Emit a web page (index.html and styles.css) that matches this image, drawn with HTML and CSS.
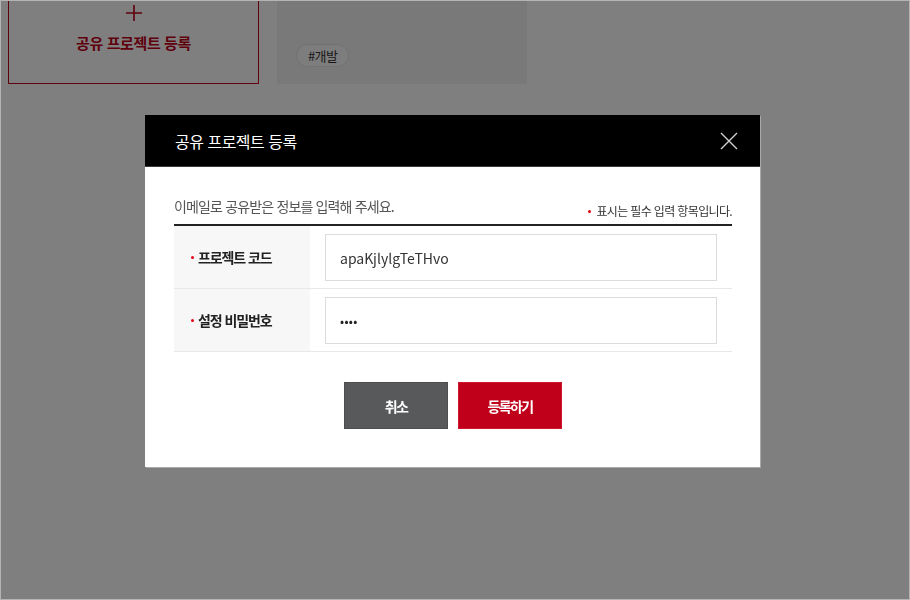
FILE: index.html
```html
<!DOCTYPE html>
<html lang="ko">
<head>
<meta charset="utf-8">
<title>공유 프로젝트 등록</title>
<link rel="stylesheet" href="styles.css">
</head>
<body>
<div class="page">
  <div class="cards">
    <div class="card card-add">
      <svg class="plus" width="16" height="16" viewBox="0 0 16 16"><path d="M8 0V16M0 8H16" stroke="#c0001a" stroke-width="1.6" fill="none"/></svg>
      <span class="add-label">공유 프로젝트 등록</span>
    </div>
    <div class="card card-project">
      <span class="tag">#개발</span>
    </div>
  </div>
</div>

<div class="overlay">
  <div class="modal">
    <div class="modal-head">
      <h2 class="modal-title">공유 프로젝트 등록</h2>
      <button class="close" type="button" aria-label="닫기">
        <svg width="18" height="18" viewBox="0 0 18 18"><path d="M1 1L17 17M17 1L1 17" stroke="#d0d0d0" stroke-width="1.4" fill="none"/></svg>
      </button>
    </div>
    <div class="modal-body">
      <div class="intro">
        <p class="desc">이메일로 공유받은 정보를 입력해 주세요.</p>
        <p class="note"><span class="dot"></span>표시는 필수 입력 항목입니다.</p>
      </div>
      <div class="form">
        <div class="row">
          <div class="label"><span class="dot"></span>프로젝트 코드</div>
          <div class="field"><div class="input">apaKjlylgTeTHvo</div></div>
        </div>
        <div class="row">
          <div class="label"><span class="dot"></span>설정 비밀번호</div>
          <div class="field"><div class="input pw">••••</div></div>
        </div>
      </div>
      <div class="actions">
        <button class="btn btn-cancel" type="button">취소</button>
        <button class="btn btn-submit" type="button">등록하기</button>
      </div>
    </div>
  </div>
</div>
</body>
</html>
```

FILE: styles.css
```css
* { box-sizing: border-box; }
html, body { margin: 0; padding: 0; }
body {
  background: #fff;
  font-family: "Noto Sans CJK KR", "Noto Sans", sans-serif;
  color: #333;
  width: 910px;
  height: 600px;
  overflow: hidden;
}
p, h2 { margin: 0; }

.page { padding: 0 8px; }
.cards {
  display: flex;
  gap: 18px;
  margin-top: -20px;
}
.card { height: 104px; }
.card-add {
  width: 251px;
  border: 1px solid #c0001a;
  display: flex;
  flex-direction: column;
  align-items: center;
}
.plus {
  display: block;
  margin-top: 24px;
}
.add-label {
  color: #c0001a;
  font-size: 15px;
  font-weight: 700;
  letter-spacing: -0.4px;
  line-height: 20px;
  margin-top: 12px;
}
.card-project {
  width: 250px;
  background: #f3f3f3;
  padding: 62px 0 0 19px;
}
.tag {
  display: inline-block;
  height: 23px;
  line-height: 21px;
  padding: 0 11px;
  border: 1px solid #e2e2e2;
  border-radius: 12px;
  background: #fbfbfb;
  font-size: 13px;
  letter-spacing: -0.6px;
  color: #333;
}

.overlay {
  position: fixed;
  inset: 0;
  background: rgba(0, 0, 0, 0.5);
  border: 1px solid #b4b4b4;
  display: flex;
  justify-content: center;
  align-items: flex-start;
  padding: 114px 5px 0 0;
}
.modal {
  width: 615px;
  background: #fff;
  box-shadow: 1px 1px 0 #a9a9a9;
}
.modal-head {
  height: 52px;
  background: #000;
  display: flex;
  align-items: center;
  justify-content: space-between;
  padding: 0 22px 0 30px;
  border-bottom: 1px solid #3a3a3a;
}
.modal-title {
  color: #fff;
  font-size: 16px;
  font-weight: 400;
  letter-spacing: -0.5px;
}
.close {
  background: none;
  border: 0;
  padding: 0;
  width: 18px;
  height: 18px;
  display: block;
}
.close svg { display: block; }

.modal-body { padding: 0 28px 38px 29px; }
.intro {
  display: flex;
  justify-content: space-between;
  align-items: flex-end;
  padding: 29px 0 8px;
}
.desc {
  font-size: 14px;
  line-height: 20px;
  letter-spacing: -0.85px;
  color: #555;
}
.note {
  font-size: 12px;
  line-height: 14px;
  letter-spacing: -0.65px;
  color: #333;
  margin-bottom: -2px;
  display: flex;
  align-items: center;
}
.dot {
  display: inline-block;
  width: 3px;
  height: 3px;
  border-radius: 50%;
  background: #e60012;
  margin-right: 5px;
  flex: none;
}
.form { border-top: 2px solid #222; }
.row {
  display: flex;
  border-bottom: 1px solid #e8e8e8;
}
.label {
  width: 136px;
  background: #f7f7f7;
  display: flex;
  align-items: center;
  padding-left: 17px;
  font-size: 14px;
  font-weight: 700;
  letter-spacing: -1.1px;
  color: #222;
}
.label .dot { margin-right: 4px; }
.field {
  flex: 1;
  padding: 8px 15px 7px;
}
.input {
  height: 47px;
  border: 1px solid #dcdcdc;
  padding: 0 14px;
  display: flex;
  align-items: center;
  font-size: 14px;
  color: #333;
}
.input.pw {
  font-size: 12px;
  letter-spacing: 0.3px;
  color: #222;
}
.actions {
  display: flex;
  justify-content: center;
  gap: 10px;
  padding-top: 30px;
}
.btn {
  width: 104px;
  height: 47px;
  font-family: inherit;
  font-size: 14px;
  font-weight: 700;
  letter-spacing: -1.6px;
  color: #fff;
  cursor: pointer;
}
.btn-cancel {
  background: #58595b;
  border: 1px solid #4c4d4f;
}
.btn-submit {
  background: #c0001a;
  border: 1px solid #d2162e;
}
```
